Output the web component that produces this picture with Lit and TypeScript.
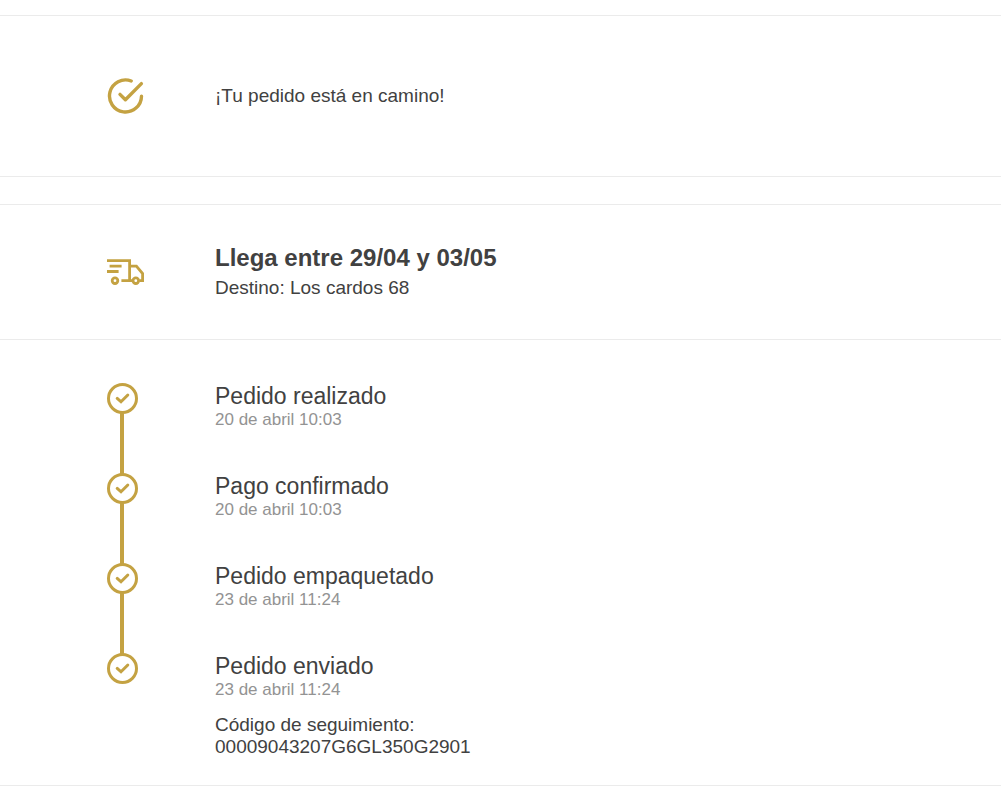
import { LitElement, html, css, svg } from "lit";
import { customElement, property } from "lit/decorators.js";

interface Step {
  title: string;
  date: string;
  tracking?: string;
}

const steps: Step[] = [
  { title: "Pedido realizado", date: "20 de abril 10:03" },
  { title: "Pago confirmado", date: "20 de abril 10:03" },
  { title: "Pedido empaquetado", date: "23 de abril 11:24" },
  { title: "Pedido enviado", date: "23 de abril 11:24", tracking: "00009043207G6GL350G2901" },
];

const doneIcon = html`<svg width="38" height="38" viewBox="0 0 38 38" fill="none"
  stroke="currentColor" stroke-width="3.4" stroke-linecap="round" aria-hidden="true">
  ${svg`<path d="M24.2 4A16 16 0 1 0 34.5 19.2" /><path d="M13 17.4L18.4 22.8L34.4 6.6" stroke-linejoin="round" />`}
</svg>`;

const truckIcon = html`<svg width="38" height="28" viewBox="0 0 38 28" fill="none"
  stroke="currentColor" stroke-width="2.8" aria-hidden="true">
  ${svg`<path d="M0 2.6H22.6V22.6H14.4M2.6 8.1H14.6M0 13.5H11.6" />
    <path d="M22.6 8.1H29.4L35.6 15.6V22.6H32.4M22.6 22.6H25.4" />
    <circle cx="8" cy="22.7" r="2.8" /><circle cx="28.8" cy="22.7" r="2.8" />`}
</svg>`;

const stepIcon = html`<svg width="31" height="31" viewBox="0 0 31 31" fill="none"
  stroke="currentColor" aria-hidden="true">
  ${svg`<circle cx="15.5" cy="15.5" r="14" stroke-width="3" /><path d="M10.2 15.4L14 18.8L20.8 12" stroke-width="3" stroke-linecap="round" />`}
</svg>`;

@customElement("order-step")
class OrderStep extends LitElement {
  @property({ attribute: false }) step!: Step;
  @property({ type: Boolean }) last = false;

  static styles = css`
    :host {
      display: grid;
      grid-template-columns: 108px 1fr;
    }
    .rail {
      display: flex;
      flex-direction: column;
      color: #c4a242;
    }
    svg {
      display: block;
      flex: none;
    }
    .line {
      flex: 1;
      width: 4px;
      margin: -1px 0 -1px 13px;
      background: currentColor;
    }
    .body {
      padding-bottom: 42px;
    }
    .body.last {
      padding-bottom: 0;
    }
    h2 {
      margin: 0;
      font-size: 23px;
      line-height: 26px;
      font-weight: 400;
    }
    time {
      display: block;
      font-size: 17px;
      line-height: 22px;
      color: #939393;
    }
    p {
      margin: 13px 0 0;
      font-size: 19px;
      line-height: 22px;
    }
    .code {
      display: block;
    }
  `;

  render() {
    const { title, date, tracking } = this.step;
    return html`
      <div class="rail">${stepIcon}${this.last ? null : html`<div class="line"></div>`}</div>
      <div class="body ${this.last ? "last" : ""}">
        <h2>${title}</h2>
        <time>${date}</time>
        ${tracking ? html`<p>Código de seguimiento: <span class="code">${tracking}</span></p>` : null}
      </div>
    `;
  }
}

@customElement("app-root")
class AppRoot extends LitElement {
  static styles = css`
    :host {
      display: block;
      padding: 15px 0 11px;
      background: #fff;
      color: #414141;
      font-family: "Liberation Sans", Arial, Helvetica, sans-serif;
    }
    .card {
      border: solid #ebebeb;
      border-width: 1px 0;
    }
    .card + .card {
      margin-top: 27px;
    }
    .row {
      display: grid;
      grid-template-columns: 108px 1fr;
      align-items: center;
      padding: 37px 24px 37px 107px;
    }
    .status {
      padding-top: 61px;
      padding-bottom: 61px;
    }
    .icon {
      display: flex;
      color: #c4a242;
    }
    .text {
      font-size: 19px;
      line-height: 28px;
    }
    h1 {
      margin: 0;
      font-size: 24px;
      line-height: 32px;
      font-weight: 700;
    }
    p {
      margin: 0;
    }
    .steps {
      list-style: none;
      margin: 0;
      padding: 43px 24px 27px 107px;
      border-top: 1px solid #ebebeb;
    }
  `;

  render() {
    return html`
      <main>
        <section class="card">
          <div class="row status">
            <div class="icon">${doneIcon}</div>
            <p class="text">¡Tu pedido está en camino!</p>
          </div>
        </section>
        <section class="card">
          <div class="row">
            <div class="icon">${truckIcon}</div>
            <div class="text">
              <h1>Llega entre 29/04 y 03/05</h1>
              <p>Destino: Los cardos 68</p>
            </div>
          </div>
          <ol class="steps">
            ${steps.map((s, i) => html`<li><order-step .step=${s} ?last=${i === steps.length - 1}></order-step></li>`)}
          </ol>
        </section>
      </main>
    `;
  }
}
